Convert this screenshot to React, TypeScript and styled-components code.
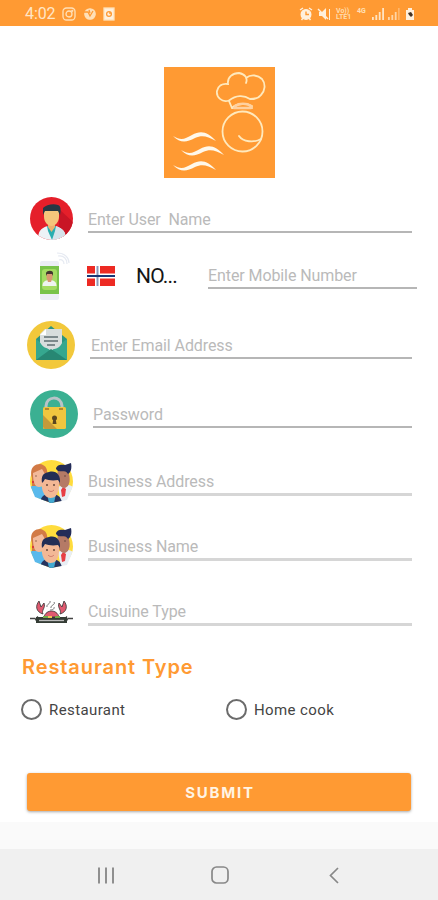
import React from 'react';
import styled, { createGlobalStyle } from 'styled-components';

const ORANGE = '#ff9a33';

const GlobalStyle = createGlobalStyle`
  *, *::before, *::after { box-sizing: border-box; }
  body { margin: 0; background: #fff; font-family: Roboto, "Noto Sans", sans-serif; }
  svg { display: block; flex: none; }
`;

const Screen = styled.div`
  width: 438px;
  height: 900px;
  display: flex;
  flex-direction: column;
  background: #fff;
  overflow: hidden;
`;

const StatusBar = styled.header`
  height: 26px;
  flex: none;
  display: flex;
  justify-content: space-between;
  align-items: center;
  padding: 2px 22px 0 25px;
  background: ${ORANGE};
  color: #ffe6c6;
`;

const StatusGroup = styled.div<{ $gap: number }>`
  display: flex;
  align-items: center;
  gap: ${(p) => p.$gap}px;
`;

const Clock = styled.span`
  width: 31px;
  font-size: 16px;
  line-height: 20px;
  letter-spacing: -0.1px;
`;

const Form = styled.main`
  height: 796px;
  flex: none;
  display: flex;
  flex-direction: column;
`;

const LogoTile = styled.div`
  width: 111px;
  height: 111px;
  flex: none;
  margin: 41px 0 0 164px;
  background: ${ORANGE};
`;

const Row = styled.div<{ $top: number; $height: number; $right?: number }>`
  display: flex;
  flex: none;
  align-items: flex-start;
  height: ${(p) => p.$height}px;
  margin-top: ${(p) => p.$top}px;
  padding-right: ${(p) => p.$right ?? 26}px;
`;

const IconCell = styled.div<{ $left: number; $width: number; $gap: number }>`
  width: ${(p) => p.$width}px;
  height: 100%;
  flex: none;
  display: flex;
  align-items: center;
  justify-content: center;
  margin: 0 ${(p) => p.$gap}px 0 ${(p) => p.$left}px;
`;

const Field = styled.div<{ $height: number; $thick?: boolean; $indent?: number }>`
  flex: 1;
  height: ${(p) => p.$height}px;
  display: flex;
  align-items: flex-end;
  padding: 0 0 1px ${(p) => p.$indent ?? 0}px;
  border-bottom: ${(p) => (p.$thick ? '3px solid #d6d6d6' : '2px solid #b6b6b6')};
  color: #bababa;
  font-size: 16px;
  line-height: 20px;
  letter-spacing: -0.09px;
  white-space: pre;
`;

const Country = styled.div`
  width: 121px;
  height: 48px;
  flex: none;
  display: flex;
  align-items: center;
  gap: 21px;
  color: #161616;
  font-size: 21px;
  line-height: 26px;
  letter-spacing: -0.8px;
`;

const SectionTitle = styled.h2`
  flex: none;
  margin: 22px 0 0 22px;
  height: 24px;
  color: ${ORANGE};
  font: 600 20px/24px Inter, sans-serif;
  letter-spacing: 0.9px;
`;

const Options = styled.div`
  flex: none;
  display: grid;
  grid-template-columns: 205px 1fr;
  margin: 19px 0 0 21px;
`;

const Option = styled.label`
  display: flex;
  align-items: center;
  gap: 7px;
  height: 22px;
  color: #444;
  font-size: 15px;
  line-height: 20px;
  letter-spacing: 0.4px;
`;

const Radio = styled.span`
  width: 21px;
  height: 21px;
  border: 2px solid #6b6b6b;
  border-radius: 50%;
`;

const OptionText = styled.span`
  padding-top: 1px;
`;

const Submit = styled.button`
  flex: none;
  width: 384px;
  height: 38px;
  margin: 53px 0 0 27px;
  padding: 1px 0 0 2px;
  border: 0;
  border-radius: 3px;
  background: ${ORANGE};
  box-shadow: 0 1px 3px rgba(0, 0, 0, 0.35);
  color: #fff4e4;
  font: 700 15px/37px Inter, sans-serif;
  letter-spacing: 1.8px;
  text-align: center;
`;

const Footer = styled.div`
  height: 27px;
  flex: none;
  background: #fafafa;
`;

const NavBar = styled.nav`
  height: 51px;
  flex: none;
  display: flex;
  align-items: center;
  padding: 1px 0 0 97px;
  background: #f0f0f0;
`;

const NavButton = styled.span<{ $gap: number }>`
  margin-left: ${(p) => p.$gap}px;
`;

const NotificationIcons = () => (
  <svg width="54" height="14" viewBox="0 0 54 14" fill="none" stroke="#ffe0b8" strokeWidth="1.3">
    <rect x="1" y="1" width="12" height="12" rx="3.5" />
    <circle cx="7" cy="7" r="3" />
    <circle cx="10.3" cy="3.8" r=".5" />
    <circle cx="28" cy="7" r="5.2" fill="#ffe0b8" />
    <path d="M22 5h4l2 4 3-5M27 3l1 3" stroke="#ff9a33" />
    <rect x="42" y="1" width="10" height="12" fill="#fff0dc" />
    <circle cx="47" cy="7" r="2.4" stroke="#ff9a33" />
    <path d="M47 6h2" stroke="#ff9a33" />
  </svg>
);

const AlarmMuteIcons = () => (
  <svg width="32" height="14" viewBox="0 0 32 14" fill="none" stroke="#fff0dc" strokeWidth="1.4">
    <circle cx="7" cy="7.4" r="4.8" fill="#fff0dc" />
    <path d="M1 3l3-2M13 3l-3-2M2.5 13l1.5-2M11.5 13 10 11" />
    <path d="M7 4.5v3h3" stroke="#ff9a33" />
    <path d="M20 5h3l4-4v12l-4-4h-3z" fill="#fff0dc" stroke="none" />
    <path d="M19 2l10 10" stroke="#fff0dc" />
    <path d="M30.5 2v11" strokeWidth="1" />
  </svg>
);

const LteLabel = styled.span`
  display: flex;
  flex-direction: column;
  width: 16px;
  font: 700 7px/6.5px Roboto, sans-serif;
  color: #ffdcae;
  white-space: nowrap;
`;

const DataLabel = styled.span`
  width: 10px;
  height: 13px;
  font: 700 7px/7px Roboto, sans-serif;
  color: #ffe0b8;
`;

const SignalIcons = () => (
  <svg width="44" height="14" viewBox="0 0 44 14" fill="#ffe4c2">
    <path d="M0 10h1.8v3H0zM3.4 8h1.8v5H3.4zM6.8 5h1.8v8H6.8zM10.2 1H12v12h-1.8z" />
    <path d="M16 10h1.8v3H16zM19.4 8h1.8v5h-1.8zM22.8 5h1.8v8h-1.8z" opacity=".8" />
    <path d="M26.2 1H27.5v12h-1.3z" opacity=".5" />
    <path d="M36 1h4v2h2v10h-8V3h2z" fill="#fff0dc" />
    <path d="M36 6l3-1 2 3-2 2-2-2z" fill="#443325" />
  </svg>
);

const ChefLogo = () => (
  <svg width="111" height="111" viewBox="0 0 111 111" fill="none" stroke="#ffe9bd" strokeWidth="1.8" strokeLinecap="round">
    <path d="M65 33.5C58 36 52 30 53 24c1-5 5-8 11-7-1-7 5-11 11-11 6 1 9 5 7 10M82 11c5-4 12-3 16 1 4 5 3 12-1 16-3 4-7 4-11 4-6-4-14-4-21 1.500" />
    <path d="M65 34l3 7h20M68 41c5-5 14-5 20-2" />
    <path d="M71 39c4-3 12-3 16 0M70 41h17" stroke="#ffd1a0" strokeWidth="2.4" />
    <circle cx="78.500" cy="64.500" r="20" />
    <path d="M75 69c4 6 15 7 22 3" />
    <g fill="#fff8ea" stroke="none">
      <path d="M9 69c8 5 12 3 19-1 9-5 16-3 24 6-9-5-14-6-21-3-9 5-15 5-22-2z" />
      <path d="M17 83c8 5 12 3 19-1 9-5 16-3 24 6-9-5-14-6-21-3-9 5-15 5-22-2z" />
      <path d="M9 98c8 5 12 3 19-1 9-5 16-3 24 6-9-5-14-6-21-3-9 5-15 5-22-2z" />
    </g>
  </svg>
);

const UserIcon = () => (
  <svg width="43" height="43" viewBox="0 0 43 43">
    <clipPath id="userClip"><circle cx="21.5" cy="21.5" r="21.5" /></clipPath>
    <g clipPath="url(#userClip)">
      <path fill="#e51f2a" d="M0 0h43v43H0z" />
      <path fill="#c91525" d="M29 12l14 13v18H29z" />
      <path fill="#edf2f6" d="M8 43c0-8 2-12 10-14h7c8 2 11 6 11 14z" />
      <path fill="#d5e3ea" d="M25 29c8 2 11 6 11 14H22z" />
      <path fill="#2aaeb0" d="M17 29h9l-1 5-3 9-4-9z" />
      <path fill="#edb36e" d="M18 24h7v6l-3.5 5-3.5-5z" />
      <path fill="#f5c57b" d="M14 14c5-3 10-3 15 0v6c0 5-4 9-7.5 9S14 25 14 20z" />
      <path fill="#263744" d="M13 18V11c3-3 10-5 15-3 3 1 3 5 2 10l-2-4H15z" />
    </g>
  </svg>
);

const PhoneIcon = () => (
  <svg width="32" height="48" viewBox="0 0 32 48">
    <rect x="2" y="9" width="19" height="39" rx="2" fill="#eceef6" />
    <path fill="#79c34a" d="M2 14h19v28H2z" />
    <rect x="4" y="17" width="15" height="21" rx="3" fill="#a4dc62" />
    <path fill="#eef4f0" d="M4.5 34c0-4 2-5 5-6h4c3 1 5 2 5 6z" />
    <path fill="#d99872" d="M8.5 21h6v5l-1.500 4h-3l-1.500-4z" />
    <path fill="#41362e" d="M8 24v-3c1-3 7-3 7 0v3l-1-2H9z" />
    <path d="M21 8c3-1 5 1 5 4M20 4c6-1 9 3 9 8M19 1c8 0 12 5 12 10" fill="none" stroke="#e6eaf2" strokeWidth="1.2" />
  </svg>
);

const NorwayFlag = () => (
  <svg width="28" height="20" viewBox="0 0 28 20">
    <path fill="#ed2a23" d="M0 0h28v20H0z" />
    <path fill="#fff" d="M8 0h5v20H8zM0 7.500h28v5H0z" />
    <path fill="#8c98b8" d="M9.500 0h2v20h-2z" />
    <path fill="#173778" d="M0 9h28v2H0z" />
  </svg>
);

const MailIcon = () => (
  <svg width="48" height="48" viewBox="0 0 48 48">
    <circle cx="24" cy="24" r="24" fill="#f2c83b" />
    <path fill="#2b9581" d="M9 18l15-13 16 13v21H9z" />
    <path fill="#d8dddd" d="M13 13l5-5h17v18l-11 7-11-7z" />
    <path fill="#36a78f" d="M9 18l15 12 16-12v21H9z" />
    <path fill="#d8dddd" d="M13 15h22v7c-3 6-7 6-11 6s-9-2-11-7z" />
    <path fill="#fff" d="M13 14l6-6v6z" />
    <path d="M17 16h14M17 20h14M20 24h8" stroke="#5f6e72" strokeWidth="1.4" />
    <path fill="#278773" d="M9 39l15-11 16 11z" />
  </svg>
);

const LockIcon = () => (
  <svg width="48" height="48" viewBox="0 0 48 48">
    <circle cx="24" cy="24" r="24" fill="#3bb092" />
    <path d="M16 19v-3c0-10 15-11 16 0v3" fill="none" stroke="#b9c3c7" strokeWidth="3" />
    <rect x="13" y="17" width="23" height="22" rx="1.5" fill="#f0c63f" />
    <path fill="#c69a3a" d="M13 25l14 14H14.500L13 37z" />
    <path d="M15 19h4M29 19h4" stroke="#9c722b" strokeWidth="1.5" />
    <circle cx="24.500" cy="28" r="2.5" fill="#5a4720" />
    <path fill="#5a4720" d="M23.500 28h2l1 6h-4z" />
  </svg>
);

const PeopleIcon = ({ id }: { id: string }) => (
  <svg width="43" height="43" viewBox="0 0 43 43">
    <clipPath id={id}><path d="M0 0h43v26L37 40 21 43 5 37 0 25z" /></clipPath>
    <g clipPath={`url(#${id})`}>
      <circle cx="21.5" cy="21.5" r="21.5" fill="#ffdc3d" />
      <path fill="#59b9ec" d="M0 27c5-2 8-2 15 1v15H2z" />
      <path fill="#e8eef4" d="M28 27c6-3 11-3 15 0v12L31 43z" />
      <path fill="#e73e45" d="M33 27l3 2-1 7-3 1-1-7z" />
      <path fill="#d27a46" d="M2 18C-1 9 4 4 10 4c6 1 9 6 6 13l-2 9H2z" />
      <path fill="#f2b99a" d="M3 13l9-4 3 5c1 7-2 13-6 13s-6-4-6-14z" />
      <path fill="#b57a66" d="M28 9l10 2c3 8 2 15-3 17-6 0-9-7-7-19z" />
      <path fill="#232c58" d="M26 9c0-4 5-5 9-4l6-2c1 5 0 9-3 11-2-4-6-2-10-3z" />
      <path fill="#26335e" d="M10 43c1-8 5-9 11-9s10 2 11 9z" />
      <path fill="#42a9d1" d="M17 34h9l-2 9h-5z" />
      <path fill="#f3b895" d="M12 18h17v9c-1 8-4 11-8.500 11S13 34 12 28z" />
      <path fill="#222d55" d="M12 23c-1-7 1-10 7-11 7-2 12 3 11 11l-2-3c-6 1-10 0-13-1-1 2-2 3-3 4z" />
      <circle cx="17" cy="25" r="1" fill="#67483d" />
      <circle cx="24" cy="25" r="1" fill="#67483d" />
      <path d="M18 30c2 2 4 2 6 0" fill="none" stroke="#cc786b" />
    </g>
    <circle cx="6" cy="16" r=".7" fill="#754b3c" />
    <circle cx="35" cy="16" r=".7" fill="#513932" />
    <circle cx="3" cy="22" r="1.1" fill="#d92e37" />
  </svg>
);

const CuisineIcon = () => (
  <svg width="43" height="24" viewBox="0 0 43 24" fill="none">
    <path d="M0 18.500h5l2 3h29l2-3h5M7 16.500l3 3h24l3-3" stroke="#444" strokeWidth="1.3" />
    <path fill="#e05a70" stroke="#313131" strokeWidth=".8" d="M13 14C6 12 5 6 9 1l2 6 3-4c2 5-3 7-1 11zM30 14c7-2 8-8 4-13l-2 6-3-4c-2 5 3 7 1 11zM14 17c2-8 13-8 15 0z" />
    <path d="M17 7c-1-3 4-3 3-6M21 8c-1-3 5-3 3-6M20 10c2 0 5-1 4-3" stroke="#777" />
    <path fill="#343c35" d="M6 17h31v6H6z" />
    <path d="M9 20.500h25" stroke="#bbb" strokeWidth="1.3" />
    <path d="M13 17h5M25 17h5" stroke="#73a84b" strokeWidth="2" />
    <path d="M18 17h4" stroke="#f1c352" strokeWidth="2" />
  </svg>
);

const RecentsIcon = () => (
  <svg width="17" height="17" viewBox="0 0 17 17" stroke="#8a8a8a" strokeWidth="1.9">
    <path d="M2 .5v16M9 .5v16M16 .5v16" />
  </svg>
);
const HomeIcon = () => (
  <svg width="18" height="18" viewBox="0 0 18 18" fill="none" stroke="#888" strokeWidth="1.7">
    <rect x="1" y="1" width="16" height="16" rx="4.5" />
  </svg>
);
const BackIcon = () => (
  <svg width="10" height="17" viewBox="0 0 10 17" fill="none" stroke="#888" strokeWidth="1.7">
    <path d="M9 1 1.500 8.500 9 16" />
  </svg>
);

export default function App() {
  return (
    <>
      <GlobalStyle />
      <Screen>
        <StatusBar>
          <StatusGroup $gap={6}>
            <Clock>4:02</Clock>
            <NotificationIcons />
          </StatusGroup>
          <StatusGroup $gap={5}>
            <AlarmMuteIcons />
            <LteLabel><span>Vo))</span><span>LTE1</span></LteLabel>
            <DataLabel>4G</DataLabel>
            <SignalIcons />
          </StatusGroup>
        </StatusBar>
        <Form>
          <LogoTile><ChefLogo /></LogoTile>
          <Row $top={19} $height={43}>
            <IconCell $left={30} $width={43} $gap={15}><UserIcon /></IconCell>
            <Field $height={36}>Enter User  Name</Field>
          </Row>
          <Row $top={12} $height={48} $right={21}>
            <IconCell $left={38} $width={32} $gap={17}><PhoneIcon /></IconCell>
            <Country><NorwayFlag /><span>NO...</span></Country>
            <Field $height={37}>Enter Mobile Number</Field>
          </Row>
          <Row $top={21} $height={48}>
            <IconCell $left={27} $width={48} $gap={15}><MailIcon /></IconCell>
            <Field $height={38} $indent={1}>Enter Email Address</Field>
          </Row>
          <Row $top={21} $height={48}>
            <IconCell $left={30} $width={48} $gap={15}><LockIcon /></IconCell>
            <Field $height={38}>Password</Field>
          </Row>
          <Row $top={22} $height={43}>
            <IconCell $left={30} $width={43} $gap={15}><PeopleIcon id="addressPeople" /></IconCell>
            <Field $height={36} $thick>Business Address</Field>
          </Row>
          <Row $top={22} $height={43}>
            <IconCell $left={30} $width={43} $gap={15}><PeopleIcon id="namePeople" /></IconCell>
            <Field $height={36} $thick>Business Name</Field>
          </Row>
          <Row $top={22} $height={43}>
            <IconCell $left={30} $width={43} $gap={15}><CuisineIcon /></IconCell>
            <Field $height={36} $thick>Cuisuine Type</Field>
          </Row>
          <SectionTitle>Restaurant Type</SectionTitle>
          <Options>
            <Option><Radio /><OptionText>Restaurant</OptionText></Option>
            <Option><Radio /><OptionText>Home cook</OptionText></Option>
          </Options>
          <Submit>SUBMIT</Submit>
        </Form>
        <Footer />
        <NavBar>
          <NavButton $gap={0}><RecentsIcon /></NavButton>
          <NavButton $gap={97}><HomeIcon /></NavButton>
          <NavButton $gap={100}><BackIcon /></NavButton>
        </NavBar>
      </Screen>
    </>
  );
}
